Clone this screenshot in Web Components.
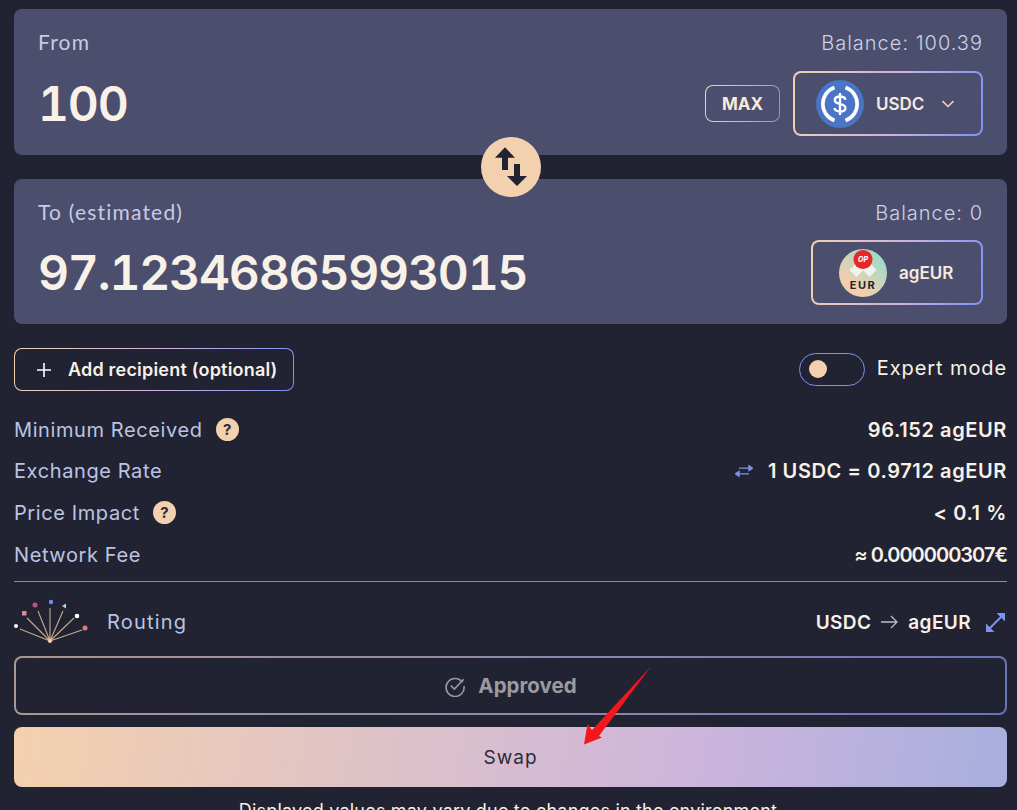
<!DOCTYPE html>
<html>
<head>
<meta charset="utf-8">
<style>
  html, body { margin: 0; height: 810px; overflow: hidden; background: #212332; }
  body { font-family: Inter, "Liberation Sans", sans-serif; color: #f8f1e7; }
</style>
</head>
<body>
<swap-page>
  <swap-panel label="From" balance="Balance: 100.39" amount="100">
    <grad-button slot="actions" kind="max">MAX</grad-button>
    <token-select slot="actions" symbol="USDC" wide>
      <svg slot="icon" width="48" height="48" viewBox="0 0 48 48">
        <circle cx="24" cy="24" r="24" fill="#4a75c4"/>
        <path d="M18.500 7.500A17.500 17.500 0 0 0 18.500 40.500M29.500 7.500A17.500 17.500 0 0 1 29.500 40.500" fill="none" stroke="#fff" stroke-width="3.600"/>
        <path d="M29.500 19.800c-.6-2.200-2.700-3.300-5.500-3.300-3.100 0-5.200 1.500-5.200 3.800 0 5 10.600 2.500 10.600 7.400 0 2.400-2.300 3.800-5.400 3.800-2.900 0-5-1.200-5.600-3.500M24 13v22" fill="none" stroke="#fff" stroke-width="2.400"/>
      </svg>
    </token-select>
  </swap-panel>
  <flip-button></flip-button>
  <swap-panel label="To (estimated)" balance="Balance: 0" amount="97.12346865993015">
    <token-select slot="actions" symbol="agEUR">
      <svg slot="icon" width="48" height="48" viewBox="0 0 48 48">
        <defs><linearGradient id="eur" x1="0.1" y1="1" x2="0.9" y2="0"><stop offset="0.25" stop-color="#f1cfae"/><stop offset="0.9" stop-color="#9bdcc8"/></linearGradient></defs>
        <circle cx="24" cy="24" r="24" fill="url(#eur)"/>
        <path d="M17.500 14l7 7-7 7-7-7zM30.500 14l7 7-7 7-7-7z" fill="#f3f2ec"/>
        <circle cx="24" cy="10.500" r="9.500" fill="#e5282c"/>
        <text x="24" y="13" font-family="Inter" font-size="7" font-weight="800" font-style="italic" fill="#fff" text-anchor="middle">OP</text>
        <text x="24" y="40" font-family="Inter" font-size="11" font-weight="700" letter-spacing="1.500" fill="#26242b" text-anchor="middle">EUR</text>
      </svg>
    </token-select>
  </swap-panel>

  <option-bar></option-bar>

  <info-row label="Minimum Received" help>96.152 agEUR</info-row>
  <info-row label="Exchange Rate">
    <svg slot="before" width="18" height="14" viewBox="0 0 18 14"><path d="M4 4.200h10M14 1.800v4.800L17.500 4.200zM14 9.800H4M4 7.400v4.800L.5 9.800z" fill="#7f91e8" stroke="#7f91e8" stroke-width="1.300"/></svg>
    1 USDC = 0.9712 agEUR
  </info-row>
  <info-row label="Price Impact" help>&lt; 0.1 %</info-row>
  <info-row label="Network Fee" style="--ls:-1px">≈ 0.000000307€</info-row>

  <routing-row></routing-row>

  <grad-button kind="approved">
    <svg width="22" height="22" viewBox="0 0 22 22" fill="none" stroke="#9b9a9e" stroke-width="1.600"><path d="M18.500 7.300A9 9 0 1 0 20 11"/><path d="M6.800 10.500l3.500 3.500 9.400-9.700"/></svg>
    Approved
  </grad-button>
  <grad-button kind="swap">Swap</grad-button>
  <p class="note">Displayed values may vary due to changes in the environment</p>

  <svg class="arrow" width="76" height="84" viewBox="580 664 76 84"><path d="M651 666.500L599 736L602 737.500L584 744.500L587.500 724L592 730Z" fill="#f5161c"/></svg>
</swap-page>

<script>
const GRAD = "linear-gradient(100deg,#f3d1ae 0%,#c4b0e4 58%,#7f91f2 100%)";
const GRAD_DIM = "linear-gradient(100deg,#a8998f 0%,#8f84ad 58%,#6a74b4 100%)";

class SwapPage extends HTMLElement {
  constructor() {
    super();
    this.attachShadow({ mode: "open" });
    this.shadowRoot.innerHTML = `
      <style>
        :host { display: flex; flex-direction: column; position: relative; box-sizing: border-box; width: 1017px; height: 810px; padding: 9px 10px 0 14px; }
        ::slotted(*) { flex: none; }
        ::slotted(.note) { margin: 13px 5px 0 0; text-align: center; font-size: 18px; line-height: 22px; letter-spacing: .2px; color: #f8f1e7; white-space: nowrap; }
        ::slotted(.arrow) { position: absolute; left: 580px; top: 664px; }
      </style>
      <slot></slot>`;
  }
}

class SwapPanel extends HTMLElement {
  constructor() {
    super();
    this.attachShadow({ mode: "open" });
    this.shadowRoot.innerHTML = `
      <style>
        :host { display: block; background: #4b4e6d; border-radius: 8px; }
        .wrap { height: 146px; box-sizing: border-box; padding: 21px 24px 0; display: grid; grid-template-columns: 1fr auto; grid-template-rows: 26px 65px; row-gap: 15px; align-content: start; }
        :host(:last-of-type) .wrap { height: 145px; row-gap: 14px; }
        .label { font: 400 21px/24px Lato, sans-serif; letter-spacing: 1.2px; color: #c9cbe2; }
        .balance { font-size: 20px; line-height: 26px; font-weight: 300; color: #cdd0e4; text-align: right; letter-spacing: 1px; }
        .amount { font-size: 48px; line-height: 65px; font-weight: 600; letter-spacing: -1.2px; color: #f8f1e7; font-feature-settings: "tnum"; }
        .actions { display: flex; align-items: center; gap: 13px; }
      </style>
      <div class="wrap">
        <div class="label"></div>
        <div class="balance"></div>
        <div class="amount"></div>
        <div class="actions"><slot name="actions"></slot></div>
      </div>`;
  }
  connectedCallback() {
    const r = this.shadowRoot;
    r.querySelector(".label").textContent = this.getAttribute("label");
    r.querySelector(".balance").textContent = this.getAttribute("balance");
    r.querySelector(".amount").textContent = this.getAttribute("amount");
  }
}

class TokenSelect extends HTMLElement {
  constructor() {
    super();
    this.attachShadow({ mode: "open" });
    this.shadowRoot.innerHTML = `
      <style>
        :host { display: block; }
        .btn { box-sizing: border-box; width: 172px; height: 65px; padding-left: 26px; display: flex; align-items: center; border: 2px solid transparent; border-radius: 8px; background: linear-gradient(#4b4e6d,#4b4e6d) padding-box, ${GRAD} border-box; }
        :host([wide]) .btn { width: 190px; padding-left: 21px; }
        .sym { margin-left: 12px; font-size: 17px; font-weight: 600; color: #f8eadb; }
        svg.chev { margin-left: 17px; }
        ::slotted(svg) { display: block; flex: none; }
      </style>
      <div class="btn">
        <slot name="icon"></slot>
        <span class="sym"></span>
      </div>`;
  }
  connectedCallback() {
    this.shadowRoot.querySelector(".sym").textContent = this.getAttribute("symbol");
    if (this.hasAttribute("wide")) {
      this.shadowRoot.querySelector(".btn").insertAdjacentHTML("beforeend",
        `<svg class="chev" width="14" height="8" viewBox="0 0 14 8" fill="none" stroke="#f3d1ae" stroke-width="1.600"><path d="M1.500 1.200l5.500 5.300 5.500-5.300"/></svg>`);
    }
  }
}

class GradButton extends HTMLElement {
  constructor() {
    super();
    this.attachShadow({ mode: "open" });
    this.shadowRoot.innerHTML = `
      <style>
        :host { display: block; }
        .b { box-sizing: border-box; display: flex; align-items: center; justify-content: center; border: 1px solid transparent; border-radius: 8px; }
        :host([kind=max]) .b { width: 75px; height: 37px; font-size: 17px; font-weight: 700; color: #f8eadb; background: linear-gradient(#4b4e6d,#4b4e6d) padding-box, ${GRAD} border-box; }
        :host([kind=approved]) .b { height: 59px; gap: 12px; border-width: 2px; font-size: 20.500px; font-weight: 700; color: #9b9a9e; background: linear-gradient(#212332,#212332) padding-box, ${GRAD_DIM} border-box; }
        :host([kind=swap]) { margin-top: 12px; }
        :host([kind=swap]) .b { height: 60px; border: 0; font-size: 19px; font-weight: 400; letter-spacing: 1px; color: #2a2b3c; background: linear-gradient(100deg,#f3d1ae 0%,#cdb5dc 68%,#a8aede 100%); }
      </style>
      <div class="b"><slot></slot></div>`;
  }
}

class FlipButton extends HTMLElement {
  constructor() {
    super();
    this.attachShadow({ mode: "open" });
    this.shadowRoot.innerHTML = `
      <style>
        :host { display: flex; justify-content: center; height: 24px; }
        .c { position: relative; z-index: 1; margin-top: -18px; width: 60px; height: 60px; border-radius: 50%; background: #f3d1ae; display: flex; align-items: center; justify-content: center; flex: none; }
      </style>
      <div class="c">
        <svg width="34" height="40" viewBox="0 0 34 40"><path fill="#212332" d="M11 .3L21 10.700H14V23H8V10.700H1zM20 17H26V29H33L23 39 13 29H20z"/></svg>
      </div>`;
  }
}

class OptionBar extends HTMLElement {
  constructor() {
    super();
    this.attachShadow({ mode: "open" });
    this.shadowRoot.innerHTML = `
      <style>
        :host { display: flex; align-items: center; justify-content: space-between; margin: 24px 0 18px; height: 43px; }
        .add { box-sizing: border-box; width: 280px; height: 43px; display: flex; align-items: center; padding-left: 21px; gap: 16px; border: 1px solid transparent; border-radius: 8px; background: linear-gradient(#212332,#212332) padding-box, ${GRAD} border-box; font-size: 18px; letter-spacing: .2px; font-weight: 600; color: #f8f1e7; white-space: nowrap; }
        .right { display: flex; align-items: center; gap: 12px; font-size: 20px; letter-spacing: .9px; color: #f8f1e7; margin-top: -3px; }
        .toggle { box-sizing: border-box; width: 66px; height: 33px; margin-top: 2px; border: 1px solid #7f91e8; border-radius: 17px; display: flex; align-items: center; padding-left: 9px; }
        .knob { width: 18px; height: 18px; border-radius: 50%; background: #f3d1ae; }
      </style>
      <div class="add"><svg width="16" height="16" viewBox="0 0 16 16" stroke="#fff" stroke-width="1.600"><path d="M8 1v14M1 8h14"/></svg>Add recipient (optional)</div>
      <div class="right"><div class="toggle"><div class="knob"></div></div>Expert mode</div>`;
  }
}

class InfoRow extends HTMLElement {
  constructor() {
    super();
    this.attachShadow({ mode: "open" });
    this.shadowRoot.innerHTML = `
      <style>
        :host { display: flex; align-items: center; justify-content: space-between; height: 41.600px; }
        .l { display: flex; align-items: center; gap: 13px; font-size: 20px; letter-spacing: .6px; color: #bcc3e2; }
        .help { width: 23px; height: 23px; border-radius: 50%; background: #f3d1ae; color: #2a2b3c; font-size: 15px; font-weight: 700; line-height: 23px; text-align: center; letter-spacing: 0; }
        .v { display: flex; align-items: center; gap: 15px; font-size: 20px; letter-spacing: var(--ls, .6px); font-weight: 600; color: #f8f1e7; }
      </style>
      <div class="l"><span class="t"></span></div>
      <div class="v"><slot name="before"></slot><span><slot></slot></span></div>`;
  }
  connectedCallback() {
    const l = this.shadowRoot.querySelector(".l");
    l.querySelector(".t").textContent = this.getAttribute("label");
    if (this.hasAttribute("help")) l.insertAdjacentHTML("beforeend", `<span class="help">?</span>`);
  }
}

class RoutingRow extends HTMLElement {
  constructor() {
    super();
    this.attachShadow({ mode: "open" });
    this.shadowRoot.innerHTML = `
      <style>
        :host { display: flex; align-items: center; justify-content: space-between; box-sizing: border-box; height: 75px; padding: 6px 2px 0 0; border-top: 1px solid #8a8b9a; margin-top: 6px; }
        .l { display: flex; align-items: center; gap: 17px; font-size: 20px; letter-spacing: 1.2px; color: #bcc3e2; }
        .r { display: flex; align-items: center; font-size: 19px; letter-spacing: .4px; font-weight: 600; color: #f8f1e7; }
        .go { margin: 0 10px; }
        .exp { margin-left: 15px; }
      </style>
      <div class="l">
        <svg width="76" height="48" viewBox="0 0 76 48" fill="none">
          <path d="M36 43L6 31M36 43L13 20M36 43L24 13M36 43V10M36 43L49 13M36 43L60 20M36 43L68 32" stroke="#cba98b" stroke-width="1.100"/>
          <circle cx="36" cy="43" r="2" fill="#f3d1ae"/>
          <circle cx="2" cy="28" r="2" fill="#fff"/>
          <rect x="8" y="13" width="4.500" height="4.500" fill="#e08a8f"/>
          <circle cx="21" cy="7" r="2.500" fill="#c0527f"/>
          <circle cx="37" cy="4" r="2.200" fill="#6d8fe8"/>
          <path d="M48 8l4-2.500v5z" fill="#a8e0d6"/>
          <circle cx="63" cy="18" r="2.300" fill="#fff"/>
          <circle cx="71" cy="30" r="2.500" fill="#e07c80"/>
        </svg>
        Routing
      </div>
      <div class="r">USDC
        <svg class="go" width="17" height="14" viewBox="0 0 17 14" fill="none" stroke="#bcbdc9" stroke-width="1.300"><path d="M0 7h16M10 1l6 6-6 6"/></svg>
        agEUR
        <svg class="exp" width="19" height="19" viewBox="0 0 19 19"><path d="M3 16L16 3" stroke="#7f91e8" stroke-width="2"/><path d="M10.500 0H19V8.500zM0 10.500V19H8.500z" fill="#7f91e8"/></svg>
      </div>`;
  }
}

customElements.define("swap-page", SwapPage);
customElements.define("swap-panel", SwapPanel);
customElements.define("token-select", TokenSelect);
customElements.define("grad-button", GradButton);
customElements.define("flip-button", FlipButton);
customElements.define("option-bar", OptionBar);
customElements.define("info-row", InfoRow);
customElements.define("routing-row", RoutingRow);
</script>
</body>
</html>
